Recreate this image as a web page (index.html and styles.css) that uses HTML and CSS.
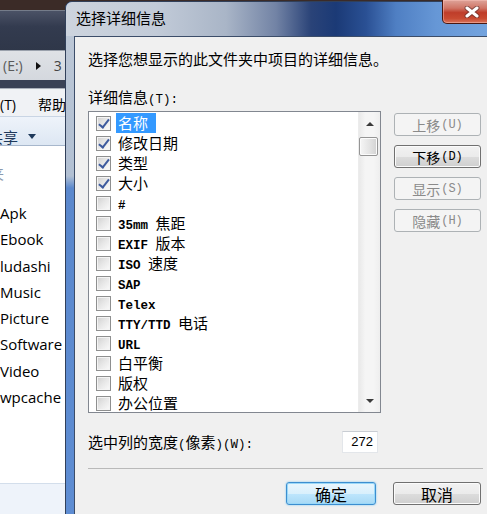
FILE: index.html
```html
<!DOCTYPE html>
<html lang="zh-CN">
<head>
<meta charset="utf-8">
<title>选择详细信息</title>
<link rel="stylesheet" href="styles.css">
</head>
<body>
<div class="screen">
  <div class="explorer">
    <div class="ex-top"></div>
    <div class="ex-addr"><span class="addr-drive">(E:)</span><span class="addr-arrow"></span><span class="addr-crumb">3</span></div>
    <div class="ex-gap"></div>
    <div class="ex-menu"><span class="menu-item menu-tools">工具(T)</span><span class="menu-item">帮助(H)</span></div>
    <div class="ex-tool"><span class="tool-share">共享</span><span class="tool-caret"></span></div>
    <div class="ex-nav">
      <div class="nav-head">收藏夹</div>
      <div class="nav-item">Apk</div>
      <div class="nav-item">Ebook</div>
      <div class="nav-item">ludashi</div>
      <div class="nav-item">Music</div>
      <div class="nav-item">Picture</div>
      <div class="nav-item">Software</div>
      <div class="nav-item">Video</div>
      <div class="nav-item">wpcache</div>
    </div>
    <div class="ex-details"></div>
  </div>

  <div class="dialog">
    <div class="titlebar">
      <span class="title">选择详细信息</span>
      <div class="close-btn">
        <svg width="16" height="12" viewBox="0 0 16 12">
          <path d="M3 2 L13 10 M13 2 L3 10" stroke="#4b2a2a" stroke-width="5" stroke-linecap="round" fill="none" opacity="0.55"/>
          <path d="M3 2 L13 10 M13 2 L3 10" stroke="#ffffff" stroke-width="3" stroke-linecap="round" fill="none"/>
        </svg>
      </div>
    </div>
    <div class="dlg-body">
      <div class="frame-left"></div>
      <div class="client">
        <p class="intro">选择您想显示的此文件夹中项目的详细信息。</p>
        <p class="label">详细信息<span class="m">(T):</span></p>
        <div class="list-row">
          <div class="listbox">
            <div class="items">
              <div class="row"><span class="cb checked"></span><span class="txt sel">名称</span></div>
              <div class="row"><span class="cb checked"></span><span class="txt">修改日期</span></div>
              <div class="row"><span class="cb checked"></span><span class="txt">类型</span></div>
              <div class="row"><span class="cb checked"></span><span class="txt">大小</span></div>
              <div class="row"><span class="cb"></span><span class="txt"><span class="m">#</span></span></div>
              <div class="row"><span class="cb"></span><span class="txt"><span class="m">35mm </span>焦距</span></div>
              <div class="row"><span class="cb"></span><span class="txt"><span class="m">EXIF </span>版本</span></div>
              <div class="row"><span class="cb"></span><span class="txt"><span class="m">ISO </span>速度</span></div>
              <div class="row"><span class="cb"></span><span class="txt"><span class="m">SAP</span></span></div>
              <div class="row"><span class="cb"></span><span class="txt"><span class="m">Telex</span></span></div>
              <div class="row"><span class="cb"></span><span class="txt"><span class="m">TTY/TTD </span>电话</span></div>
              <div class="row"><span class="cb"></span><span class="txt"><span class="m">URL</span></span></div>
              <div class="row"><span class="cb"></span><span class="txt">白平衡</span></div>
              <div class="row"><span class="cb"></span><span class="txt">版权</span></div>
              <div class="row"><span class="cb"></span><span class="txt">办公位置</span></div>
            </div>
            <div class="vscroll">
              <div class="sb-arrow"><span class="tri-up"></span></div>
              <div class="sb-thumb"></div>
              <div class="sb-arrow sb-down"><span class="tri-down"></span></div>
            </div>
          </div>
          <div class="side-btns">
            <button class="btn" disabled>上移<span class="m">(U)</span></button>
            <button class="btn">下移<span class="m">(D)</span></button>
            <button class="btn" disabled>显示<span class="m">(S)</span></button>
            <button class="btn" disabled>隐藏<span class="m">(H)</span></button>
          </div>
        </div>
        <div class="width-row">
          <span class="width-label">选中列的宽度<span class="m">(</span>像素<span class="m">)(W):</span></span>
          <span class="width-input">272</span>
        </div>
        <div class="sep"></div>
        <div class="foot">
          <button class="btn big default">确定</button>
          <button class="btn big">取消</button>
        </div>
      </div>
    </div>
  </div>
</div>
</body>
</html>
```

FILE: styles.css
```css
* { box-sizing: border-box; margin: 0; padding: 0; }
html, body { width: 487px; height: 514px; overflow: hidden; }
body {
  background: #3b2b27;
  font-family: "Noto Sans CJK SC", "Noto Sans", sans-serif;
  color: #000;
}
.screen { position: relative; width: 487px; height: 514px; overflow: hidden; background: #3b2b27; }

/* background explorer window */
.explorer {
  position: absolute; left: 0; top: 10px; width: 487px; height: 504px;
  display: flex; flex-direction: column;
}
.ex-top { height: 40px; flex: none; background: linear-gradient(#4b5266, #333b4f 40%, #2f3749); border-top: 1px solid #757c8a; }
.ex-addr {
  height: 30px; flex: none; display: flex; align-items: center;
  background: linear-gradient(#dfe2e6, #d4d8de); border-top: 1px solid #9aa1ac;
  font-family: "Open Sans", sans-serif; font-size: 14px; color: #5a5a5a; padding-left: 3px;
}
.addr-arrow { width: 0; height: 0; border-left: 5px solid #111; border-top: 4px solid transparent; border-bottom: 4px solid transparent; margin: 0 13px 0 13px; }
.addr-crumb { color: #444; }
.ex-gap { height: 8px; flex: none; background: #3a4256; }
.ex-menu {
  height: 28px; flex: none; display: flex; align-items: center; gap: 22px;
  background: #f0f2f5; border-top: 1px solid #aab0bb;
  font-size: 14px; padding-top: 2px;
}
.menu-tools { margin-left: -28px; font-family: "Open Sans", "Noto Sans CJK SC", sans-serif; }
.ex-tool {
  height: 30px; flex: none; display: flex; align-items: center;
  background: linear-gradient(#eef3fa, #dde7f3); border-top: 1px solid #c9d5e4; border-bottom: 1px solid #a7b7cc;
  font-size: 15px; color: #1e395b; padding-top: 10px;
}
.tool-share { margin-left: -12px; }
.tool-caret { width: 0; height: 0; border-top: 5px solid #1e395b; border-left: 4px solid transparent; border-right: 4px solid transparent; margin-left: 10px; }
.ex-nav {
  flex: 1; background: #fff; display: flex; flex-direction: column;
  font-family: "Open Sans", sans-serif; font-size: 15px; padding-top: 14px;
}
.nav-head { height: 26px; line-height: 26px; color: #8a9aae; font-family: "Noto Sans CJK SC", sans-serif; margin-left: -38px; font-size: 14px; margin-bottom: 14px; }
.nav-item { height: 26.3px; line-height: 26px; white-space: nowrap; }
.ex-details { height: 31px; flex: none; background: #eef3fa; border-top: 1px solid #d3deeb; }

/* dialog */
.dialog {
  position: absolute; left: 65px; top: 1px; width: 440px; height: 530px;
  border: 1px solid #31405a; border-radius: 7px 7px 0 0;
  display: flex; flex-direction: column;
  background: #5b88cd;
}
.titlebar {
  height: 34px; flex: none; position: relative; display: flex; align-items: center;
  padding-left: 10px; padding-bottom: 3px; border-radius: 6px 6px 0 0;
  background: linear-gradient(90deg, #cdd4de 0, #c2cbd8 90px, #a9b5c7 160px, #7283a5 210px, #2a4378 245px, #1b3a76 270px, #2a5094 300px, #4f7fc3 330px, #6697d6 370px, #78a7e0 438px);
  font-size: 15px;
}
.title { line-height: 20px; }
.close-btn {
  position: absolute; left: 376px; top: -2px; width: 56px; height: 24px;
  border: 1px solid #4a1710; border-top: none; border-radius: 0 0 5px 5px;
  background: linear-gradient(#dea49a 0, #d07566 35%, #bf3d2a 55%, #c84a31 80%, #d9735a 100%);
  box-shadow: inset 0 0 0 1px rgba(255, 200, 190, 0.45);
  display: flex; align-items: center; justify-content: center; padding-left: 3px;
}
.dlg-body { flex: 1; display: flex; }
.frame-left {
  width: 8px; flex: none;
  background: linear-gradient(#bcc7d6 0, #b2c0d3 140px, #5b88cd 152px, #5e8dd3 100%);
}
.client {
  flex: 1; background: #f0f0f0;
  border-left: 1px solid #3c4d69; border-top: 1px solid #3c4d69;
  padding: 12px 23px 0 13px;
  font-size: 15px;
}
.m { font-family: "Liberation Mono", monospace; font-size: 12.5px; line-height: 1; }
.intro { line-height: 20px; height: 20px; }
.label { line-height: 20px; height: 20px; margin-top: 18px; }

.list-row { display: flex; margin-top: 4px; }
.listbox {
  width: 293px; height: 302px; flex: none; display: flex;
  background: #fff; border: 1px solid #828790;
}
.items { flex: 1; padding-top: 1px; overflow: hidden; }
.row { height: 20px; display: flex; align-items: center; padding-left: 7px; }
.row .m { font-weight: bold; }
.cb {
  width: 15px; height: 15px; flex: none; margin-right: 5px; position: relative;
  border: 1px solid #8e8f8f;
  background: linear-gradient(135deg, #cfcfcf 0, #e6e6e6 45%, #fbfbfb 100%);
  box-shadow: inset 0 0 0 1px #f4f4f4;
}
.cb.checked::after {
  content: ""; position: absolute; left: 4px; top: 0px; width: 4px; height: 9px;
  border-right: 2px solid #3d5a9e; border-bottom: 2px solid #3d5a9e;
  transform: rotate(38deg);
}
.txt { line-height: 20px; height: 20px; padding: 0 8px 0 2px; white-space: nowrap; }
.txt.sel { background: #3399ff; color: #fff; }

.vscroll {
  width: 22px; flex: none; display: flex; flex-direction: column;
  background: linear-gradient(90deg, #e9e9e9, #f5f5f5 30%, #f5f5f5 70%, #eeeeee);
  border-left: 1px solid #ececec;
}
.sb-arrow { height: 24px; display: flex; align-items: center; justify-content: center; }
.sb-down { margin-top: auto; height: 22px; }
.tri-up { width: 0; height: 0; border-bottom: 4px solid #3a3a3a; border-left: 4px solid transparent; border-right: 4px solid transparent; }
.tri-down { width: 0; height: 0; border-top: 4px solid #3a3a3a; border-left: 4px solid transparent; border-right: 4px solid transparent; }
.sb-thumb {
  height: 19px; width: 19px; margin: 1px 0 0 0;
  border: 1px solid #959595; border-radius: 2px;
  background: linear-gradient(90deg, #f6f6f6, #e4e4e4 55%, #d2d2d2);
  box-shadow: inset 0 0 0 1px #fbfbfb;
}

.side-btns { display: flex; flex-direction: column; gap: 9px; margin-left: 13px; padding-top: 2px; }
.btn {
  width: 87px; height: 23px; border: 1px solid #707070; border-radius: 3px;
  background: linear-gradient(#f2f2f2 0, #ebebeb 50%, #dddddd 50%, #cfcfcf 100%);
  box-shadow: inset 0 0 0 1px #fbfbfb;
  font-family: "Noto Sans CJK SC", sans-serif; font-size: 14px; color: #000;
  display: flex; align-items: center; justify-content: center; line-height: 20px;
}
.btn .m { font-size: 12px; margin-left: 1px; }
.btn:disabled { border-color: #adb2b5; background: #f4f4f4; color: #8a8a8a; box-shadow: none; }

.width-row { display: flex; align-items: center; margin-top: 18px; height: 22px; }
.width-label { width: 254px; line-height: 20px; height: 20px; white-space: nowrap; }
.width-input {
  width: 36px; height: 22px; background: #fff; border: 1px solid #e3e6ea; border-top-color: #c9cdd3;
  font-family: "Liberation Sans", sans-serif; font-size: 13px; text-align: right; padding-right: 4px; line-height: 20px;
}
.sep { height: 1px; background: #b9b9b9; margin: 15px -2px 0 0; }
.foot { display: flex; justify-content: flex-end; gap: 17px; margin-top: 13px; }
.btn.big { width: 88px; font-size: 16px; }
.btn.default {
  width: 90px; border-color: #3c8ed0;
  background: linear-gradient(#e9f6fd 0, #d9f0fc 50%, #bee6fd 50%, #a7d9f5 100%);
  box-shadow: inset 0 0 0 1px #9ad8f8, 0 0 2px #6cc3f0;
}
```
